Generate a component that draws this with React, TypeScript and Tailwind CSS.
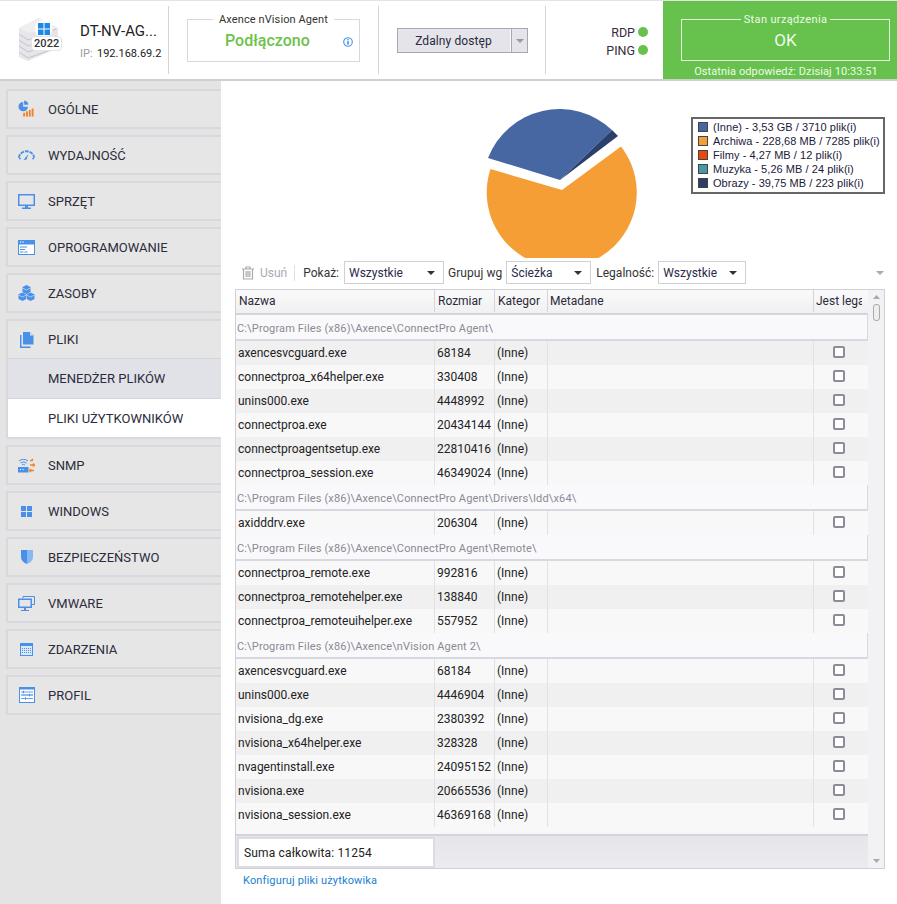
import React from "react";

const blue = "#4a90e8";
const orange = "#f0842c";

const Icons: Record<string, React.ReactNode> = {
  ogolne: (
    <svg width="17" height="18" viewBox="0 0 18 18">
      <path d="M5.5 0.5 A5 5 0 1 0 10.5 5.5 L5.5 5.5 Z" fill={blue} transform="translate(0 1)" />
      <path d="M6.5 0 A5 5 0 0 1 11 4.5 L6.5 4.5 Z" fill={blue} />
      <rect x="5.5" y="13" width="2" height="4" fill={orange} />
      <rect x="8.5" y="11.5" width="2" height="5.5" fill={orange} />
      <rect x="11.5" y="10" width="2" height="7" fill={orange} />
      <rect x="14.5" y="8.5" width="2" height="8.5" fill={orange} />
    </svg>
  ),
  wydajnosc: (
    <svg width="17" height="12" viewBox="0 0 18 12">
      <path d="M1 9 A8 7 0 0 1 17 9" fill="none" stroke={blue} strokeWidth="2" strokeDasharray="4 1" />
      <path d="M6 11 L11 5 L9 11 Z" fill={blue} />
      <rect x="1" y="9" width="2" height="1.5" fill={blue} />
      <rect x="15" y="9" width="2" height="1.5" fill={blue} />
    </svg>
  ),
  sprzet: (
    <svg width="17" height="15" viewBox="0 0 17 15">
      <rect x="0.75" y="0.75" width="15.5" height="10.5" fill="none" stroke={blue} strokeWidth="1.5" />
      <rect x="7" y="11" width="3" height="3" fill={blue} />
      <rect x="4" y="13.5" width="9" height="1.5" fill={blue} />
    </svg>
  ),
  oprogramowanie: (
    <svg width="17" height="15" viewBox="0 0 17 15">
      <rect x="0.5" y="0.5" width="16" height="14" fill="#fff" stroke={blue} />
      <rect x="0" y="0" width="17" height="4.5" fill={blue} />
      <rect x="2" y="1.5" width="1.2" height="1.2" fill="#fff" />
      <rect x="4.5" y="1.5" width="1.2" height="1.2" fill="#fff" />
      <rect x="2" y="6.5" width="7" height="1" fill={blue} />
      <rect x="2" y="9" width="5" height="1" fill={blue} />
      <rect x="2" y="11.5" width="3.5" height="1" fill={blue} />
      <rect x="6.5" y="11.5" width="3" height="1" fill={blue} />
    </svg>
  ),
  zasoby: (
    <svg width="17" height="16" viewBox="0 0 17 16">
      <path d="M8.5 0 L12.5 2 V7 L8.5 9 L4.5 7 V2 Z" fill={blue} />
      <path d="M4.5 7.5 L8.2 9.3 V14 L4.5 16 L0.5 14 V9.3 Z" fill={blue} />
      <path d="M12.5 7.5 L16.5 9.3 V14 L12.5 16 L8.8 14 V9.3 Z" fill={blue} />
      <path d="M4.5 3 L8.5 5 L12.5 3 M0.5 10 L4.5 12 L8.2 10 M8.8 10 L12.5 12 L16.5 10" fill="none" stroke="#cfe0f7" strokeWidth="0.7" />
    </svg>
  ),
  pliki: (
    <svg width="14" height="16" viewBox="0 0 14 16">
      <path d="M3 0 H10 L13.5 3.5 V12.5 H3 Z" fill={blue} />
      <path d="M10 0 V3.5 H13.5 Z" fill="#cfe0f7" />
      <path d="M0.7 3 V15.3 H10.5" fill="none" stroke={blue} strokeWidth="1.6" />
    </svg>
  ),
  snmp: (
    <svg width="17" height="15" viewBox="0 0 17 15">
      <path d="M1 3 A7 7 0 0 1 10 3 M2.5 5 A5 5 0 0 1 8.5 5 M4 7 A2.5 2.5 0 0 1 7 7" fill="none" stroke={blue} strokeWidth="1" />
      <rect x="0" y="9" width="10.5" height="5.5" fill={blue} />
      <rect x="2" y="11" width="1" height="1" fill="#fff" />
      <rect x="4.5" y="11" width="1" height="1" fill="#fff" />
      <path d="M12 2.5 H15 M15 1 L13.8 2.5 M12 7 H16 M15 5.5 L16.5 7 L15 8.5 M12 12.5 H16 M13 11 L11.5 12.5 L13 14" fill="none" stroke={orange} strokeWidth="1.5" />
    </svg>
  ),
  windows: (
    <svg width="11" height="11" viewBox="0 0 11 11">
      <rect x="0" y="0" width="5" height="5" fill={blue} />
      <rect x="6" y="0" width="5" height="5" fill={blue} />
      <rect x="0" y="6" width="5" height="5" fill={blue} />
      <rect x="6" y="6" width="5" height="5" fill={blue} />
    </svg>
  ),
  bezp: (
    <svg width="12" height="14" viewBox="0 0 12 14">
      <path d="M0 0 H6 V14 C2 12.5 0 10 0 7 Z" fill={blue} />
      <path d="M12 0 H6 V14 C10 12.5 12 10 12 7 Z" fill="#86b9f2" />
    </svg>
  ),
  vmware: (
    <svg width="17" height="15" viewBox="0 0 17 15">
      <path d="M5 2.5 V0.5 H16.5 V8.5 H14" fill="none" stroke={blue} strokeWidth="1" />
      <rect x="0.75" y="3.25" width="12.5" height="8" fill="none" stroke={blue} strokeWidth="1.5" />
      <rect x="6" y="11" width="2" height="3" fill={blue} />
      <rect x="3" y="14" width="8" height="1" fill={blue} />
    </svg>
  ),
  zdarzenia: (
    <svg width="13" height="13" viewBox="0 0 13 13">
      <rect x="0.5" y="0.5" width="12" height="12" fill="#dbe8fa" stroke={blue} />
      <rect x="0" y="0" width="13" height="3" fill={blue} />
      <path d="M2 5.5 H11 M2 7.5 H11 M2 9.5 H11" stroke={blue} strokeDasharray="1 1" strokeWidth="1" />
    </svg>
  ),
  profil: (
    <svg width="16" height="16" viewBox="0 0 16 16">
      <rect x="0.5" y="0.5" width="15" height="15" fill="#fff" stroke={blue} />
      <rect x="0" y="0" width="16" height="2.5" fill={blue} />
      <rect x="2" y="7" width="12" height="2" fill="#b9d3f5" />
      <path d="M2 5 H14 M2 8 H14 M2 11.5 H14" stroke="#6a9fe6" strokeWidth="1" />
      <rect x="4" y="3.8" width="1" height="2.5" fill={blue} />
      <rect x="10" y="6.8" width="1" height="2.5" fill={blue} />
      <rect x="6" y="10.2" width="1" height="2.5" fill={blue} />
    </svg>
  ),
};

type NavProps = { icon: string; label: string };
function NavItem({ icon, label }: NavProps) {
  return (
    <div className="h-10 border-2 border-r-0 border-[#d8d8de] bg-[#e6e6e6] flex items-center box-border">
      <div className="w-[35px] flex justify-center shrink-0 ml-[1px]">{Icons[icon]}</div>
      <span className="ml-[4px] text-[13px] text-[#2c2c3c] leading-none">{label}</span>
    </div>
  );
}

function Caret({ color = "#333" }: { color?: string }) {
  return (
    <svg width="8" height="4" viewBox="0 0 8 4" className="shrink-0">
      <path d="M0 0 H8 L4 4 Z" fill={color} />
    </svg>
  );
}

function Select({ value, w }: { value: string; w: string }) {
  return (
    <div className={`h-[23px] border border-[#cfcfd6] bg-white flex items-center justify-between pl-1 pr-[8px] box-border text-[#2a2a4a] ${w}`}>
      <span>{value}</span>
      <Caret />
    </div>
  );
}

const groups: { path: string; firstAlt: boolean; rows: [string, string][] }[] = [
  {
    path: "C:\\Program Files (x86)\\Axence\\ConnectPro Agent\\",
    firstAlt: true,
    rows: [
      ["axencesvcguard.exe", "68184"],
      ["connectproa_x64helper.exe", "330408"],
      ["unins000.exe", "4448992"],
      ["connectproa.exe", "20434144"],
      ["connectproagentsetup.exe", "22810416"],
      ["connectproa_session.exe", "46349024"],
    ],
  },
  {
    path: "C:\\Program Files (x86)\\Axence\\ConnectPro Agent\\Drivers\\Idd\\x64\\",
    firstAlt: false,
    rows: [["axidddrv.exe", "206304"]],
  },
  {
    path: "C:\\Program Files (x86)\\Axence\\ConnectPro Agent\\Remote\\",
    firstAlt: false,
    rows: [
      ["connectproa_remote.exe", "992816"],
      ["connectproa_remotehelper.exe", "138840"],
      ["connectproa_remoteuihelper.exe", "557952"],
    ],
  },
  {
    path: "C:\\Program Files (x86)\\Axence\\nVision Agent 2\\",
    firstAlt: false,
    rows: [
      ["axencesvcguard.exe", "68184"],
      ["unins000.exe", "4446904"],
      ["nvisiona_dg.exe", "2380392"],
      ["nvisiona_x64helper.exe", "328328"],
      ["nvagentinstall.exe", "24095152"],
      ["nvisiona.exe", "20665536"],
      ["nvisiona_session.exe", "46369168"],
    ],
  },
];

const legend: [string, string][] = [
  ["#4767a3", "(Inne) - 3,53 GB / 3710 plik(i)"],
  ["#f59e35", "Archiwa - 228,68 MB / 7285 plik(i)"],
  ["#e8490f", "Filmy - 4,27 MB / 12 plik(i)"],
  ["#4a97a6", "Muzyka - 5,26 MB / 24 plik(i)"],
  ["#2b3f6b", "Obrazy - 39,75 MB / 223 plik(i)"],
];

function Row({ name, size, alt }: { name: string; size: string; alt: boolean }) {
  return (
    <div className={`flex h-6 items-center ${alt ? "bg-[#f0f0f0]" : "bg-[#f8f8f9]"}`}>
      <div className="w-[199px] pl-[2px] h-full flex items-center border-r border-[#e2e2e6]">{name}</div>
      <div className="w-[60px] pl-[2px] h-full flex items-center border-r border-[#e2e2e6]">{size}</div>
      <div className="w-[53px] pl-[2px] h-full flex items-center border-r border-[#e2e2e6]">(Inne)</div>
      <div className="w-[266px] h-full border-r border-[#e2e2e6]" />
      <div className="flex-1 h-full flex items-center justify-center pr-[4px] pb-[3px]">
        <div className="w-[12px] h-[12px] border-2 border-[#8c8c98] rounded-[2px] bg-white box-border" />
      </div>
    </div>
  );
}

export default function App() {
  return (
    <div className="w-[897px] h-[904px] bg-white overflow-hidden text-[12px] text-[#222] font-['Roboto',sans-serif]">
      {/* top bar */}
      <header className="h-[81px] border-t border-b-2 border-t-[#e4e4e4] border-b-[#cfcfcf] flex box-border">
        <div className="w-[169px] flex items-center my-[5px] border-r border-[#d5d5d5] pl-[18px] box-border">
          <div className="relative w-[44px] h-[48px] shrink-0">
            <svg width="42" height="46" viewBox="0 0 42 46" className="absolute left-0 top-0">
              <path d="M1 12 L21 2 L40 12 V32 L10 45 L1 41 Z" fill="#e6e6ea" />
              <path d="M1 12 L10 17 L40 12 L21 2 Z" fill="#efeff2" />
              <path d="M1 18 L10 24 L38 13 M1 24 L10 30 L38 20 M1 30 L10 36 L38 26 M1 36 L10 42 L38 32" fill="none" stroke="#b9b9c2" strokeWidth="0.8" />
              <circle cx="25.5" cy="13" r="9" fill="#fff" />
              <rect x="20" y="7" width="5.5" height="5.5" fill="#1e88e5" />
              <rect x="26.5" y="7" width="5.5" height="5.5" fill="#1e88e5" />
              <rect x="20" y="13.5" width="5.5" height="5.5" fill="#1e88e5" />
              <rect x="26.5" y="13.5" width="5.5" height="5.5" fill="#1e88e5" />
            </svg>
            <span className="absolute left-[13px] top-[20px] px-[2px] bg-white border border-[#e4e4e8] rounded text-[11px] font-medium leading-[13px] text-[#333] tracking-[0.1px]">2022</span>
          </div>
          <div className="ml-[18px] flex flex-col mt-[3px]">
            <span className="text-[15px] leading-5 text-[#222]">DT-NV-AG...</span>
            <div className="mt-[5px] flex text-[11px] leading-4">
              <span className="text-[#9a9aa2] w-[17px]">IP:</span>
              <span>192.168.69.2</span>
            </div>
          </div>
        </div>
        <div className="w-[210px] my-[5px] border-r border-[#d5d5d5] pl-[18px] box-border">
          <fieldset className="w-[173px] h-[49px] mt-[7px] border border-[#d8d8dc] box-border relative">
            <legend className="mx-auto px-[6px] text-[11px] leading-[13px] text-[#333] tracking-[0.1px]">Axence nVision Agent</legend>
            <div className="pl-[37px] pt-[5px] text-[16px] leading-5 font-medium text-[#6cc24a]">Podłączono</div>
            <svg width="10" height="10" viewBox="0 0 10 10" className="absolute left-[155px] top-[11px]">
              <circle cx="5" cy="5" r="4.3" fill="none" stroke="#4a90e8" strokeWidth="1.1" />
              <rect x="4.2" y="4" width="1.6" height="3.6" fill="#4a90e8" />
              <rect x="4.2" y="2.1" width="1.6" height="1.2" fill="#4a90e8" />
            </svg>
          </fieldset>
        </div>
        <div className="w-[167px] my-[5px] border-r border-[#d5d5d5] pl-[18px] pt-[22px] box-border">
          <div className="w-[131px] h-[25px] border border-[#a8a8b2] bg-[#e4e4ea] flex box-border">
            <div className="flex-1 flex items-center justify-center text-[12px] tracking-[0.1px] text-[#2a2a3a] border-r border-[#fafafa] pr-[1px] pt-[1px]">Zdalny dostęp</div>
            <div className="w-[16px] border-l border-[#a8a8b2] flex items-center justify-center"><Caret color="#999" /></div>
          </div>
        </div>
        <div className="w-[117px] flex flex-col items-end pr-[15px] pt-[23px] gap-[2px] box-border">
          <div className="flex items-center h-4 gap-[3px]"><span className="text-[12.5px] text-[#3a2a3a] mt-[2px]">RDP</span><span className="w-[10px] h-[10px] rounded-full bg-[#66c24c] -mt-[1px]" /></div>
          <div className="flex items-center h-4 gap-[3px]"><span className="text-[12.5px] text-[#3a2a3a] mt-[2px]">PING</span><span className="w-[10px] h-[10px] rounded-full bg-[#66c24c] -mt-[1px]" /></div>
        </div>
        <div className="flex-1 bg-[#66c24c] text-white flex flex-col items-center">
          <fieldset className="w-[209px] h-[49px] mt-[12px] border border-[#e8f6e2] box-border ml-[11px]">
            <legend className="mx-auto px-[3px] text-[11px] leading-[13px] tracking-[0.35px] text-[#eef9ea]">Stan urządzenia</legend>
            <div className="text-center text-[17px] leading-[20px] pt-[4px] text-[#f0faec]">OK</div>
          </fieldset>
          <div className="text-[11px] tracking-[0.1px] mt-[4px] leading-[14px] text-[#f0faec] ml-[12px]">Ostatnia odpowiedź: Dzisiaj 10:33:51</div>
        </div>
      </header>

      <div className="flex h-[823px]">
        {/* sidebar */}
        <nav className="w-[221px] shrink-0 bg-[#e4e4e4] pl-[6px] pt-[8px] flex flex-col gap-[6px] box-border">
          <NavItem icon="ogolne" label="OGÓLNE" />
          <NavItem icon="wydajnosc" label="WYDAJNOŚĆ" />
          <NavItem icon="sprzet" label="SPRZĘT" />
          <NavItem icon="oprogramowanie" label="OPROGRAMOWANIE" />
          <NavItem icon="zasoby" label="ZASOBY" />
          <div className="border-2 border-r-0 border-[#d8d8de] box-border flex flex-col">
            <div className="h-[38px] bg-[#e6e6e6] flex items-center border-b border-[#d4d4da]">
              <div className="w-[35px] flex justify-center shrink-0 ml-[1px]">{Icons.pliki}</div>
              <span className="ml-[4px] text-[13px] text-[#2c2c3c] leading-none">PLIKI</span>
            </div>
            <div className="h-10 bg-[#e1e2e8] flex items-center pl-[40px] pt-[1px] text-[13px] text-[#2c2c3c] border-b border-[#d4d4da]">MENEDŻER PLIKÓW</div>
            <div className="h-[38px] bg-white flex items-center pl-[40px] pt-[2px] text-[13px] text-[#2c2c3c]">PLIKI UŻYTKOWNIKÓW</div>
          </div>
          <NavItem icon="snmp" label="SNMP" />
          <NavItem icon="windows" label="WINDOWS" />
          <NavItem icon="bezp" label="BEZPIECZEŃSTWO" />
          <NavItem icon="vmware" label="VMWARE" />
          <NavItem icon="zdarzenia" label="ZDARZENIA" />
          <NavItem icon="profil" label="PROFIL" />
        </nav>

        {/* main */}
        <main className="flex-1 flex flex-col min-w-0 pl-[14px] pr-[12px]">
          <div className="h-[177px] flex shrink-0">
            <div className="ml-[250px] w-[160px] h-[177px] shrink-0 overflow-hidden">
              <svg width="160" height="177" viewBox="485 81 160 177">
                <path d="M562 190 L490.5 169 A75 75 0 1 0 621 146.5 Z" fill="#f59e35" />
                <path d="M560 180 L488 158 A76.5 76.5 0 0 1 612 130 Z" fill="#4767a3" />
                <path d="M560 180 L612 130 L618 136 Z" fill="#2b3f6b" />
              </svg>
            </div>
            <div className="ml-[46px] mt-[36px] w-[194px] h-[77px] border-2 border-[#666] box-border pl-[5px] pt-[1px] font-['Liberation_Sans',sans-serif] text-[11px] tracking-[0.05px] text-[#1a1a3a]">
              {legend.map(([c, t]) => (
                <div key={t} className="flex items-center h-[14px] whitespace-nowrap">
                  <span className="w-[10px] h-[10px] border border-[#444] mr-[5px] shrink-0 box-border" style={{ background: c }} />
                  <span>{t}</span>
                </div>
              ))}
            </div>
          </div>

          {/* toolbar */}
          <div className="h-[32px] shrink-0 flex items-center relative text-[#333] pt-[1px] pb-[4px] box-border">
            <svg width="14" height="14" viewBox="0 0 14 14" className="ml-[6px]">
              <path d="M1 3 H13 M5 3 V1 H9 V3 M2.5 3 V13 H11.5 V3 M5.2 5 V11 M7 5 V11 M8.8 5 V11" fill="none" stroke="#aaa" strokeWidth="1.2" />
            </svg>
            <span className="ml-[5px] text-[#aaaab0]">Usuń</span>
            <span className="ml-[7px] mr-[8px] w-px h-[16px] bg-[#e0e0e0]" />
            <span>Pokaż:</span>
            <div className="ml-[5px]"><Select value="Wszystkie" w="w-[100px]" /></div>
            <span className="ml-[4px] tracking-[0.05px]">Grupuj wg</span>
            <div className="ml-[4px]"><Select value="Ścieżka" w="w-[85px]" /></div>
            <span className="ml-[5px]">Legalność:</span>
            <div className="ml-[4px]"><Select value="Wszystkie" w="w-[88px]" /></div>
            <div className="ml-auto mr-[1px]"><Caret color="#aaa" /></div>
          </div>

          {/* table */}
          <div className="w-[650px] h-[580px] border border-[#d0d0d8] flex box-border -mt-[1px]">
            <div className="w-[632px] flex flex-col">
              <div className="h-[25px] pb-[1px] flex items-center bg-gradient-to-b from-[#fafafa] to-[#f0f0f2] border-b-2 border-[#d4d4dc] box-border shrink-0 text-[#2a2a3a]">
                <div className="w-[199px] pl-[3px] h-full flex items-center border-r border-[#d4d4dc]">Nazwa</div>
                <div className="w-[60px] pl-[3px] h-full flex items-center border-r border-[#d4d4dc]">Rozmiar</div>
                <div className="w-[53px] pl-[3px] h-full flex items-center border-r border-[#d4d4dc]">Kategor</div>
                <div className="w-[266px] pl-[2px] h-full flex items-center border-r border-[#d4d4dc]">Metadane</div>
                <div className="pl-[2px] w-[48px] h-full flex items-center overflow-hidden whitespace-nowrap">Jest lega</div>
              </div>
              <div className="h-[519px] shrink-0 flex flex-col overflow-hidden bg-[#f8f8f9]">
                {groups.map((g) => (
                  <div key={g.path}>
                    <div className="h-[26px] flex items-center pl-[1px] pt-[4px] text-[11px] text-[#8a8a94] bg-[#f9f9fb] border-r border-b-2 border-[#d8d8e0] box-border tracking-[0.15px]">{g.path}</div>
                    {g.rows.map((r, i) => (
                      <Row key={g.path + r[0]} name={r[0]} size={r[1]} alt={g.firstAlt ? i % 2 === 0 : i % 2 === 1} />
                    ))}
                  </div>
                ))}
              </div>
              <div className="flex-1 border-t-2 border-[#d4d4dc] bg-gradient-to-b from-[#e6e6ea] to-[#ececf0] pl-[1px] pt-[1px] box-border">
                <div className="w-[198px] h-[31px] bg-white border-2 border-[#dcdce2] box-border flex items-center pl-[5px] text-[12px] tracking-[0.15px] text-[#222]">Suma całkowita: 11254</div>
              </div>
            </div>
            <div className="flex-1 bg-[#f2f2f5] flex flex-col items-center relative">
              <svg width="7" height="4" viewBox="0 0 7 4" className="mt-[5px]"><path d="M3.5 0 L7 4 H0 Z" fill="#aaa" /></svg>
              <div className="w-[7px] h-[17px] border border-[#aaa] rounded-[3px] bg-[#eee] mt-[5px]" />
              <svg width="7" height="4" viewBox="0 0 7 4" className="mt-auto mb-[5px]"><path d="M0 0 H7 L3.5 4 Z" fill="#aaa" /></svg>
            </div>
          </div>
          <a className="mt-[5px] ml-[8px] text-[11px] leading-[13px] text-[#1a7fd0] tracking-[0.15px]">Konfiguruj pliki użytkowika</a>
        </main>
      </div>
    </div>
  );
}
